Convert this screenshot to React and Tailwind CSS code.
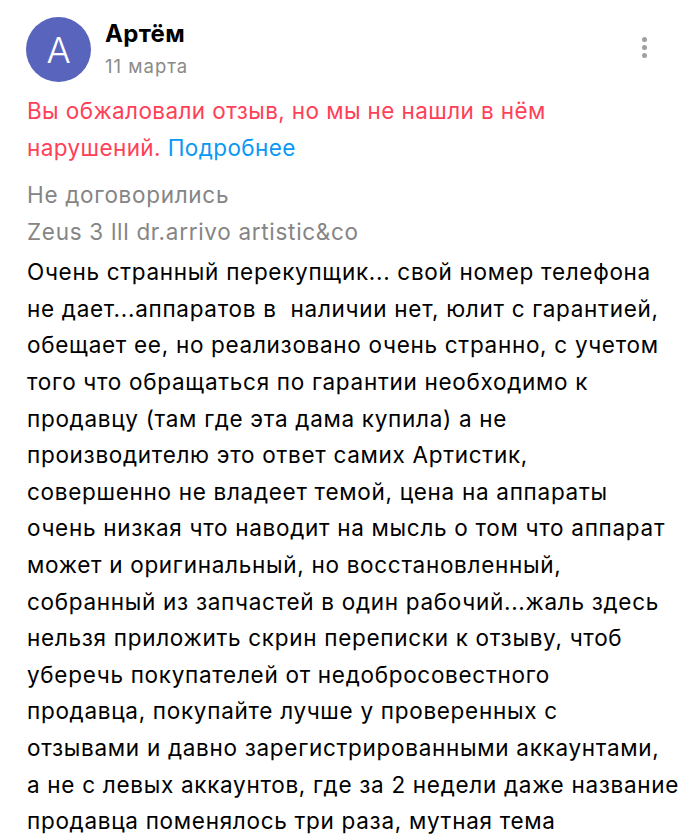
const lines = [
  'Очень странный перекупщик... свой номер телефона',
  'не дает...аппаратов в  наличии нет, юлит с гарантией,',
  'обещает ее, но реализовано очень странно, с учетом',
  'того что обращаться по гарантии необходимо к',
  'продавцу (там где эта дама купила) а не',
  'производителю это ответ самих Артистик,',
  'совершенно не владеет темой, цена на аппараты',
  'очень низкая что наводит на мысль о том что аппарат',
  'может и оригинальный, но восстановленный,',
  'собранный из запчастей в один рабочий...жаль здесь',
  'нельзя приложить скрин переписки к отзыву, чтоб',
  'уберечь покупателей от недобросовестного',
  'продавца, покупайте лучше у проверенных с',
  'отзывами и давно зарегистрированными аккаунтами,',
  'а не с левых аккаунтов, где за 2 недели даже название',
  'продавца поменялось три раза, мутная тема',
]

export default function App() {
  return (
    <div className="w-[700px] h-[835px] overflow-hidden bg-white font-['Inter',sans-serif] text-[#000]">
      {/* Header */}
      <div className="flex items-start pl-[26px] pr-[53px] pt-[17px]">
        <div className="flex h-[65px] w-[65px] shrink-0 items-center justify-center rounded-full bg-[#5965bd] text-[36px] font-light text-white">
          А
        </div>
        <div className="ml-[14px] flex-1 pt-[2px]">
          <div className="text-[24px] font-bold leading-[30px] tracking-[0.3px]">Артём</div>
          <div className="mt-[4px] text-[18.5px] leading-[26px] tracking-[1px] text-[#8a8a8a]">11 марта</div>
        </div>
        <div className="mt-[20px] flex flex-col gap-[3px]">
          <span className="h-[5px] w-[5px] rounded-full bg-[#a0a0a0]" />
          <span className="h-[5px] w-[5px] rounded-full bg-[#a0a0a0]" />
          <span className="h-[5px] w-[5px] rounded-full bg-[#a0a0a0]" />
        </div>
      </div>

      {/* Appeal notice */}
      <div className="mt-[10px] px-[27px] text-[22.5px] leading-[37px] tracking-[0.4px] text-[#ff4057]">
        <div className="whitespace-nowrap">Вы обжаловали отзыв, но мы не нашли в нём</div>
        <div className="whitespace-nowrap">
          нарушений. <span className="text-[#0a98f5]">Подробнее</span>
        </div>
      </div>

      {/* Review */}
      <div className="mt-[11px] px-[27px] text-[22.5px] leading-[36.6px] tracking-[0.7px]">
        <div className="text-[#858585]">Не договорились</div>
        <div className="text-[#858585]">Zeus 3 lll dr.arrivo artistic&amp;co</div>
        <div className="mt-[4px]">
          {lines.map((l, i) => (
            <div key={i} className="whitespace-pre">{l}</div>
          ))}
        </div>
      </div>
    </div>
  )
}
